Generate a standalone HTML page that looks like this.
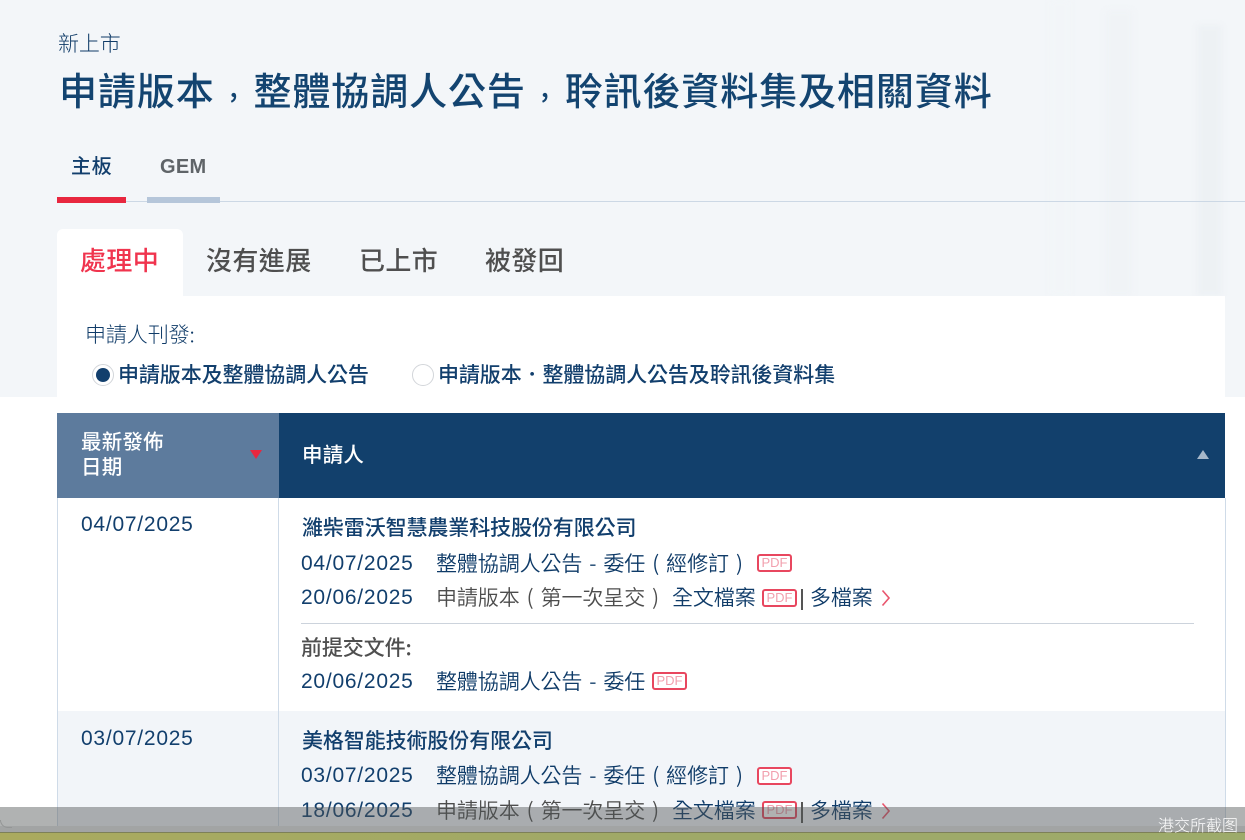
<!DOCTYPE html>
<html lang="zh-Hant"><head><meta charset="utf-8"><title>新上市</title>
<style>
*{box-sizing:border-box}
html,body{margin:0;padding:0;width:1245px;height:840px;overflow:hidden;background:#fff}
body{position:relative;font-family:"Liberation Sans","Noto Sans CJK TC",sans-serif;color:#123f6d}
.a{position:absolute;white-space:nowrap}
.cjk{font-family:"Noto Sans CJK TC",sans-serif}
.t{font-size:21px;letter-spacing:-.1px;line-height:28px;height:28px}
.l{font-weight:350;color:#0f3b68}
.w{word-spacing:2.4px}
.d{font-size:21px;letter-spacing:.75px;line-height:28px;height:28px;font-family:"Liberation Sans",sans-serif;color:#123f6d}
.p{display:inline-block;width:21px;text-align:center}
.c{display:inline-block;width:38.9px;text-align:center;font-size:28px;position:relative;top:-8px}
.pdf{position:absolute;width:35px;height:18px;border:2px solid #e8475f;border-radius:3px;color:#f2a0ae;font:400 13px/14px "Liberation Sans",sans-serif;text-align:center;letter-spacing:0;background:#fff}
.tab{font-size:26px;line-height:36px;letter-spacing:.4px;font-weight:500}
</style></head><body>
<div class="a" style="left:0;top:0;width:1245px;height:397px;background:#f3f6f9"></div>
<div class="a" style="left:1105px;top:10px;width:28px;height:286px;background:#f0f3f6;filter:blur(3px)"></div>
<div class="a" style="left:1197px;top:25px;width:25px;height:271px;background:#edf1f4;filter:blur(3px)"></div>
<div class="a" style="left:1050px;top:0;width:20px;height:296px;background:#f2f5f8;filter:blur(3px)"></div>

<div class="a cjk t" style="left:58px;top:29px;font-weight:300;color:#0f3b68">新上市</div>
<div class="a cjk" style="left:59px;top:63px;font-size:38px;line-height:52px;letter-spacing:.9px;font-weight:500;color:#134470">申請版本<span class="c">,</span>整體協調人公告<span class="c">,</span>聆訊後資料集及相關資料</div>

<div class="a cjk" style="left:71px;top:151px;font-size:20px;line-height:28px;letter-spacing:.6px;font-weight:500;color:#123f6d">主板</div>
<div class="a" style="left:160px;top:152px;font-size:20px;line-height:30px;font-weight:700;color:#5f6468;letter-spacing:.3px">GEM</div>
<div class="a" style="left:57px;top:201px;width:1188px;height:1px;background:#ccd8e5"></div>
<div class="a" style="left:57px;top:197px;width:69px;height:6px;background:#e8273f"></div>
<div class="a" style="left:147px;top:197px;width:73px;height:6px;background:#b5c6da"></div>

<div class="a" style="left:57px;top:229px;width:126px;height:70px;background:#fff;border-radius:6px 6px 0 0"></div>
<div class="a" style="left:57px;top:296px;width:1168px;height:101px;background:#fff"></div>
<div class="a cjk tab" style="left:80px;top:242px;color:#f0344e">處理中</div>
<div class="a cjk tab" style="left:206px;top:242px;color:#4f4f4f">沒有進展</div>
<div class="a cjk tab" style="left:359px;top:242px;color:#4f4f4f">已上市</div>
<div class="a cjk tab" style="left:485px;top:242px;color:#4f4f4f">被發回</div>

<div class="a cjk t" style="left:85px;top:320px;font-weight:300;color:#0f3b68">申請人刊發:</div>
<div class="a" style="left:92px;top:364px;width:22px;height:22px;border:1px solid #d3d6da;border-radius:50%;background:#fff"></div>
<div class="a" style="left:96px;top:368px;width:14px;height:14px;border-radius:50%;background:#123f6d"></div>
<div class="a cjk t" style="left:118px;top:360px;font-weight:500">申請版本及整體協調人公告</div>
<div class="a" style="left:412px;top:364px;width:22px;height:22px;border:1px solid #d3d6da;border-radius:50%;background:#fff"></div>
<div class="a cjk t" style="left:438px;top:360px;font-weight:500">申請版本．整體協調人公告及聆訊後資料集</div>

<div class="a" style="left:57px;top:413px;width:222px;height:85px;background:#5d7b9d"></div>
<div class="a" style="left:279px;top:413px;width:946px;height:85px;background:#12406c"></div>
<div class="a cjk" style="left:81px;top:428px;font-size:20.5px;line-height:25px;letter-spacing:.2px;font-weight:500;color:#fff;white-space:normal;width:100px">最新發佈<br>日期</div>
<div class="a" style="left:250px;top:450px;width:0;height:0;border-left:6px solid transparent;border-right:6px solid transparent;border-top:9px solid #e8273f"></div>
<div class="a cjk" style="left:302px;top:439px;font-size:20.5px;line-height:28px;letter-spacing:.2px;font-weight:500;color:#fff">申請人</div>
<div class="a" style="left:1197px;top:450px;width:0;height:0;border-left:6px solid transparent;border-right:6px solid transparent;border-bottom:9px solid #a7b8ca"></div>

<div class="a" style="left:57px;top:711px;width:1168px;height:115px;background:#f2f5f9"></div>
<div class="a" style="left:57px;top:498px;width:1px;height:328px;background:#cfdbe8"></div>
<div class="a" style="left:278px;top:498px;width:1px;height:328px;background:#cfdbe8"></div>
<div class="a" style="left:1225px;top:498px;width:1px;height:328px;background:#cfdbe8"></div>

<div class="a d" style="left:81px;top:511px">04/07/2025</div>
<div class="a cjk t" style="left:302px;top:513px;font-weight:500">濰柴雷沃智慧農業科技股份有限公司</div>
<div class="a d" style="left:301px;top:550px">04/07/2025</div>
<div class="a cjk t l w" style="left:436px;top:549px">整體協調人公告 - 委任<span class="p">(</span>經修訂<span class="p">)</span></div>
<div class="pdf" style="left:757px;top:554px">PDF</div>
<div class="a d" style="left:301px;top:584px">20/06/2025</div>
<div class="a cjk t l" style="left:436px;top:583px;color:#4d4d4d">申請版本<span class="p">(</span>第一次呈交<span class="p">)</span></div>
<div class="a cjk t l" style="left:672px;top:583px">全文檔案</div>
<div class="pdf" style="left:762px;top:589px">PDF</div>
<div class="a" style="left:801px;top:589px;width:2px;height:21px;background:#555"></div>
<div class="a cjk t l" style="left:810px;top:583px">多檔案</div>
<svg class="a" style="left:880px;top:589px" width="12" height="18" viewBox="0 0 12 18"><path d="M2.5 1.500l6.500 7.500-6.500 7.500" fill="none" stroke="#e9566e" stroke-width="1.600"/></svg>
<div class="a" style="left:301px;top:623px;width:893px;height:1px;background:#ccd3dc"></div>
<div class="a cjk t" style="left:301px;top:633px;font-weight:500;color:#4f4f4f">前提交文件:</div>
<div class="a d" style="left:301px;top:668px">20/06/2025</div>
<div class="a cjk t l w" style="left:436px;top:667px">整體協調人公告 - 委任</div>
<div class="pdf" style="left:652px;top:672px">PDF</div>

<div class="a d" style="left:81px;top:725px">03/07/2025</div>
<div class="a cjk t" style="left:302px;top:726px;font-weight:500">美格智能技術股份有限公司</div>
<div class="a d" style="left:301px;top:762px">03/07/2025</div>
<div class="a cjk t l w" style="left:436px;top:761px">整體協調人公告 - 委任<span class="p">(</span>經修訂<span class="p">)</span></div>
<div class="pdf" style="left:757px;top:767px">PDF</div>
<div class="a d" style="left:301px;top:797px">18/06/2025</div>
<div class="a cjk t l" style="left:436px;top:796px;color:#4d4d4d">申請版本<span class="p">(</span>第一次呈交<span class="p">)</span></div>
<div class="a cjk t l" style="left:672px;top:796px">全文檔案</div>
<div class="pdf" style="left:762px;top:801px">PDF</div>
<div class="a" style="left:801px;top:802px;width:2px;height:21px;background:#555"></div>
<div class="a cjk t l" style="left:810px;top:796px">多檔案</div>
<svg class="a" style="left:880px;top:802px" width="12" height="18" viewBox="0 0 12 18"><path d="M2.5 1.500l6.500 7.500-6.500 7.500" fill="none" stroke="#e9566e" stroke-width="1.600"/></svg>

<div class="a" style="left:0;top:826px;width:1245px;height:6px;background:#e6e6e6"></div>
<div class="a" style="left:0;top:820px;width:12px;height:8px;border-left:1px solid #ccc;border-bottom:1px solid #ccc;border-radius:0 0 0 8px"></div>
<div class="a" style="left:0;top:807px;width:1245px;height:25px;background:rgba(80,84,84,.45)"></div>
<div class="a" style="left:0;top:832px;width:1245px;height:1px;background:#7d8058"></div>
<div class="a" style="left:0;top:833px;width:1245px;height:7px;background:linear-gradient(90deg,#aaaa5e,#9fa968 55%,#9dab6a)"></div>
<div class="a cjk" style="left:1158px;top:813px;font-size:16px;line-height:22px;font-weight:300;color:#fff">港交所截图</div>
</body></html>
